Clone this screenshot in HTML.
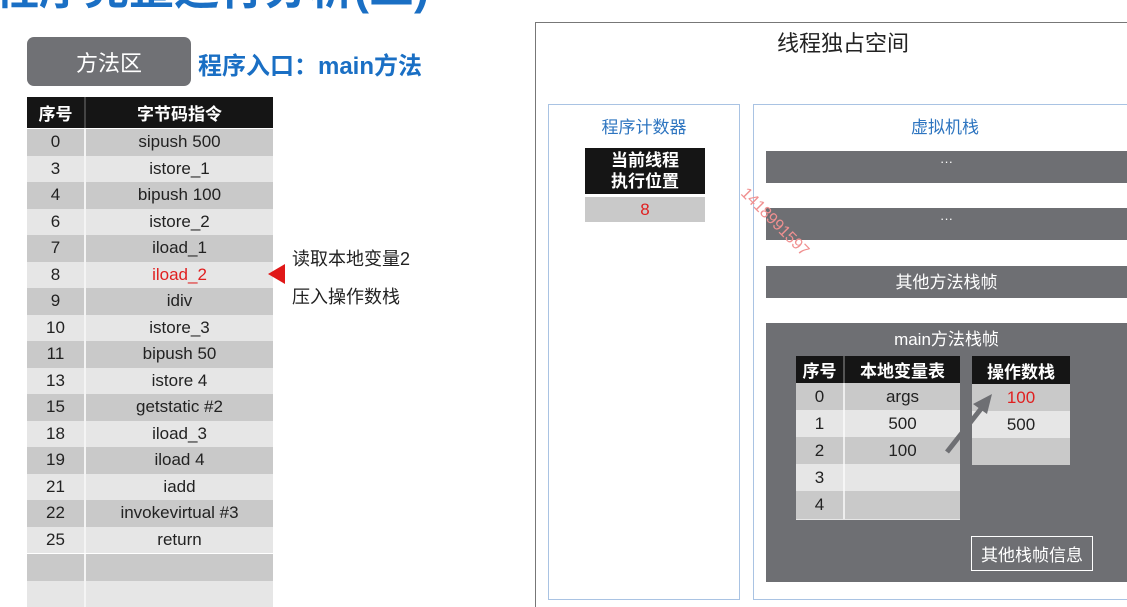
<!DOCTYPE html>
<html><head><meta charset="utf-8"><style>
*{margin:0;padding:0;box-sizing:border-box}
html,body{width:1127px;height:607px;overflow:hidden}
body{background:#fff;position:relative;font-family:"Liberation Sans","Noto Sans CJK SC",sans-serif;color:#222}
.a{position:absolute}
.c{display:flex;align-items:center;justify-content:center}
.row{position:absolute;left:27px;width:246px;height:26.5px;display:flex;font-size:17px}
.row div{display:flex;align-items:center;justify-content:center}
.row .n{width:59px;border-right:2px solid #f4f4f4}
.row .t{flex:1}
.d{background:#c9c9c9}.l{background:#e6e6e6}
.bar{position:absolute;left:766px;width:361px;height:32px;background:#6e6f73;color:#fff;font-size:17px;display:flex;justify-content:center}
</style></head><body>
<div class="a" style="left:-6px;top:-48px;font-size:45px;font-weight:bold;color:#1a6fc4;white-space:nowrap">程序完整运行分析(二)</div>

<div class="a c" style="left:27px;top:37px;width:164px;height:49px;background:#707175;border-radius:7px;color:#fff;font-size:22px">方法区</div>
<div class="a" style="left:198px;top:46px;font-size:24px;color:#1a6fc4;font-weight:bold">程序入口：main方法</div>

<div class="row" style="top:97px;height:31px;background:#151515;color:#fff;font-weight:bold"><div class="n" style="border-color:#444">序号</div><div class="t">字节码指令</div></div>
<div class="row d" style="top:129px"><div class="n">0</div><div class="t">sipush 500</div></div>
<div class="row l" style="top:155.5px"><div class="n">3</div><div class="t">istore_1</div></div>
<div class="row d" style="top:182px"><div class="n">4</div><div class="t">bipush 100</div></div>
<div class="row l" style="top:208.5px"><div class="n">6</div><div class="t">istore_2</div></div>
<div class="row d" style="top:235px"><div class="n">7</div><div class="t">iload_1</div></div>
<div class="row l" style="top:261.5px"><div class="n">8</div><div class="t" style="color:#e02020">iload_2</div></div>
<div class="row d" style="top:288px"><div class="n">9</div><div class="t">idiv</div></div>
<div class="row l" style="top:314.5px"><div class="n">10</div><div class="t">istore_3</div></div>
<div class="row d" style="top:341px"><div class="n">11</div><div class="t">bipush 50</div></div>
<div class="row l" style="top:367.5px"><div class="n">13</div><div class="t">istore 4</div></div>
<div class="row d" style="top:394px"><div class="n">15</div><div class="t">getstatic #2</div></div>
<div class="row l" style="top:420.5px"><div class="n">18</div><div class="t">iload_3</div></div>
<div class="row d" style="top:447px"><div class="n">19</div><div class="t">iload 4</div></div>
<div class="row l" style="top:473.5px"><div class="n">21</div><div class="t">iadd</div></div>
<div class="row d" style="top:500px"><div class="n">22</div><div class="t">invokevirtual #3</div></div>
<div class="row l" style="top:526.5px"><div class="n">25</div><div class="t">return</div></div>
<div class="row d" style="top:554px"><div class="n"></div><div class="t"></div></div>
<div class="row l" style="top:581px"><div class="n"></div><div class="t"></div></div>

<div class="a" style="left:268px;top:264px;width:0;height:0;border-top:10px solid transparent;border-bottom:10px solid transparent;border-right:17px solid #e01818"></div>
<div class="a" style="left:292px;top:240px;font-size:18px;line-height:38px">读取本地变量2<br>压入操作数栈</div>

<div class="a" style="left:535px;top:22px;width:620px;height:600px;border:1.5px solid #777"></div>
<div class="a" style="left:735px;top:26px;width:216px;text-align:center;font-size:22px">线程独占空间</div>

<div class="a" style="left:548px;top:104px;width:192px;height:496px;border:1.5px solid #a9c3e3"></div>
<div class="a" style="left:548px;top:113px;width:192px;text-align:center;font-size:17px;color:#2e75c0">程序计数器</div>
<div class="a c" style="left:585px;top:148px;width:120px;height:46px;background:#151515;color:#fff;font-size:17px;font-weight:bold;line-height:21px;text-align:center">当前线程<br>执行位置</div>
<div class="a c" style="left:585px;top:197px;width:120px;height:25px;background:#c9c9c9;color:#e02020;font-size:17px">8</div>

<div class="a" style="left:753px;top:104px;width:400px;height:496px;border:1.5px solid #a9c3e3"></div>
<div class="a" style="left:845px;top:113px;width:200px;text-align:center;font-size:17px;color:#2e75c0">虚拟机栈</div>
<div class="bar" style="top:151px;font-size:13px;padding-top:3px">···</div>
<div class="bar" style="top:208px;font-size:13px;padding-top:3px">···</div>
<div class="bar" style="top:266px;padding-top:2px">其他方法栈帧</div>

<div class="a" style="left:766px;top:323px;width:361px;height:259px;background:#6e6f73"></div>
<div class="a" style="left:766px;top:325px;width:361px;text-align:center;color:#fff;font-size:17px">main方法栈帧</div>

<div class="a" style="left:796px;top:356px;width:164px;height:164px;background:#e6e6e6"></div>
<div class="a" style="left:796px;top:356px;width:164px;height:27px;background:#151515;color:#fff;font-weight:bold;font-size:17px;display:flex"><div class="c" style="width:49px;border-right:2px solid #555">序号</div><div class="c" style="flex:1">本地变量表</div></div>
<div class="a" style="left:796px;top:383px;width:164px;font-size:17px">
<div style="display:flex;height:27px" class="d"><div class="c" style="width:49px;border-right:2px solid #eee">0</div><div class="c" style="flex:1">args</div></div>
<div style="display:flex;height:27px" class="l"><div class="c" style="width:49px;border-right:2px solid #f6f6f6">1</div><div class="c" style="flex:1">500</div></div>
<div style="display:flex;height:27px" class="d"><div class="c" style="width:49px;border-right:2px solid #eee">2</div><div class="c" style="flex:1">100</div></div>
<div style="display:flex;height:27px" class="l"><div class="c" style="width:49px;border-right:2px solid #f6f6f6">3</div><div class="c" style="flex:1"></div></div>
<div style="display:flex;height:28px" class="d"><div class="c" style="width:49px;border-right:2px solid #eee">4</div><div class="c" style="flex:1"></div></div>
</div>

<div class="a c" style="left:972px;top:356px;width:98px;height:28px;background:#151515;color:#fff;font-weight:bold;font-size:17px">操作数栈</div>
<div class="a c d" style="left:972px;top:384px;width:98px;height:27px;color:#e02020;font-size:17px">100</div>
<div class="a c l" style="left:972px;top:411px;width:98px;height:27px;font-size:17px">500</div>
<div class="a d" style="left:972px;top:438px;width:98px;height:27px"></div>

<svg class="a" style="left:0;top:0" width="1127" height="607"><line x1="947" y1="452" x2="984" y2="405" stroke="#6e6f73" stroke-width="5"/><polygon points="992,394 973,404 987,414" fill="#6e6f73"/>
<text x="740" y="194" fill="#f09090" font-size="16" font-family="Liberation Sans" transform="rotate(45 740 194)">1418991597</text></svg>

<div class="a c" style="left:971px;top:536px;width:122px;height:35px;border:1.5px solid #fff;color:#fff;font-size:17px">其他栈帧信息</div>
</body></html>
